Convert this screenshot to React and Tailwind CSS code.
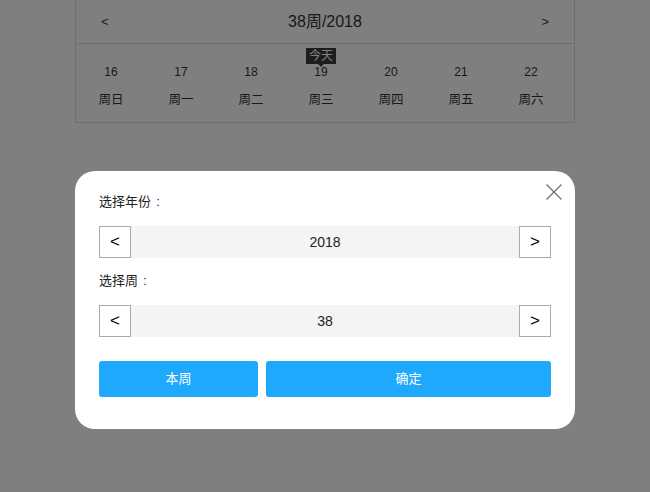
const days = [
    { num: 16, name: "周日" },
    { num: 17, name: "周一" },
    { num: 18, name: "周二" },
    { num: 19, name: "周三", today: true },
    { num: 20, name: "周四" },
    { num: 21, name: "周五" },
    { num: 22, name: "周六" },
];

function Stepper({ value }) {
    return (
        <div className="flex h-[32px] w-full bg-[#f4f4f4]">
            <button className="flex h-[32px] w-[32px] items-center justify-center border border-[#aaaaaa] bg-white text-[17px] text-black">
                &lt;
            </button>
            <div className="flex flex-1 items-center justify-center text-[14px] text-[#222]">
                {value}
            </div>
            <button className="flex h-[32px] w-[32px] items-center justify-center border border-[#aaaaaa] bg-white text-[17px] text-black">
                &gt;
            </button>
        </div>
    );
}

function Label({ text, className = "" }) {
    return (
        <p className={"text-[13px] leading-[20px] text-[#222] " + className}>
            {text}
            <span className="inline-block w-[14px] text-center">:</span>
        </p>
    );
}

export default function App() {
    return (
        <main
            className="relative h-[492px] w-[650px] overflow-hidden bg-white"
            style={{ fontFamily: '"Liberation Sans", "Noto Sans CJK SC", sans-serif' }}
        >
            {/* week calendar under the overlay */}
            <section className="mx-auto w-[500px] border border-t-0 border-[#dddddd] bg-white text-[#333]">
                <div className="flex h-[44px] items-center justify-between border-b border-[#dddddd] px-[25px]">
                    <span className="text-[13px]">&lt;</span>
                    <span className="text-[16px]">38周/2018</span>
                    <span className="text-[13px]">&gt;</span>
                </div>
                <div className="grid grid-cols-[repeat(7,70px)] pb-[12px] pt-[18px]">
                    {days.map((d) => (
                        <div key={d.num} className="flex flex-col items-center">
                            <span className="relative text-[12px] leading-[20px]">
                                {d.today && (
                                    <span className="absolute left-1/2 top-[-14px] flex -translate-x-1/2 flex-col items-center">
                                        <span className="whitespace-nowrap bg-[#3a3a3a] px-[3px] text-[12px] leading-[16px] text-white">
                                            今天
                                        </span>
                                        <span className="h-0 w-0 border-x-[3px] border-t-[3px] border-x-transparent border-t-[#3a3a3a]" />
                                    </span>
                                )}
                                {d.num}
                            </span>
                            <span className="mt-[8px] text-[12.5px] leading-[20px]">{d.name}</span>
                        </div>
                    ))}
                </div>
            </section>

            {/* overlay + dialog */}
            <div className="absolute inset-0 flex justify-center bg-black/50 pt-[171px]">
                <div className="relative h-[258px] w-[500px] rounded-[20px] bg-white px-[24px] pt-[21px]">
                    <button className="absolute right-[13px] top-[13px]">
                        <svg width="16" height="16" viewBox="0 0 16 16">
                            <path d="M0.5 0.5 L15.5 15.5 M15.5 0.5 L0.5 15.5" stroke="#5f6f7f" strokeWidth="1.2" fill="none" />
                        </svg>
                    </button>
                    <Label text="选择年份" />
                    <div className="mt-[14px]">
                        <Stepper value="2018" />
                    </div>
                    <Label text="选择周" className="mt-[13px]" />
                    <div className="mt-[14px]">
                        <Stepper value="38" />
                    </div>
                    <div className="mt-[24px] flex gap-[8px]">
                        <button className="h-[36px] w-[159px] rounded-[3px] bg-[#1fa9fd] text-[13px] text-white">
                            本周
                        </button>
                        <button className="h-[36px] flex-1 rounded-[3px] bg-[#1fa9fd] text-[13px] text-white">
                            确定
                        </button>
                    </div>
                </div>
            </div>
        </main>
    );
}
